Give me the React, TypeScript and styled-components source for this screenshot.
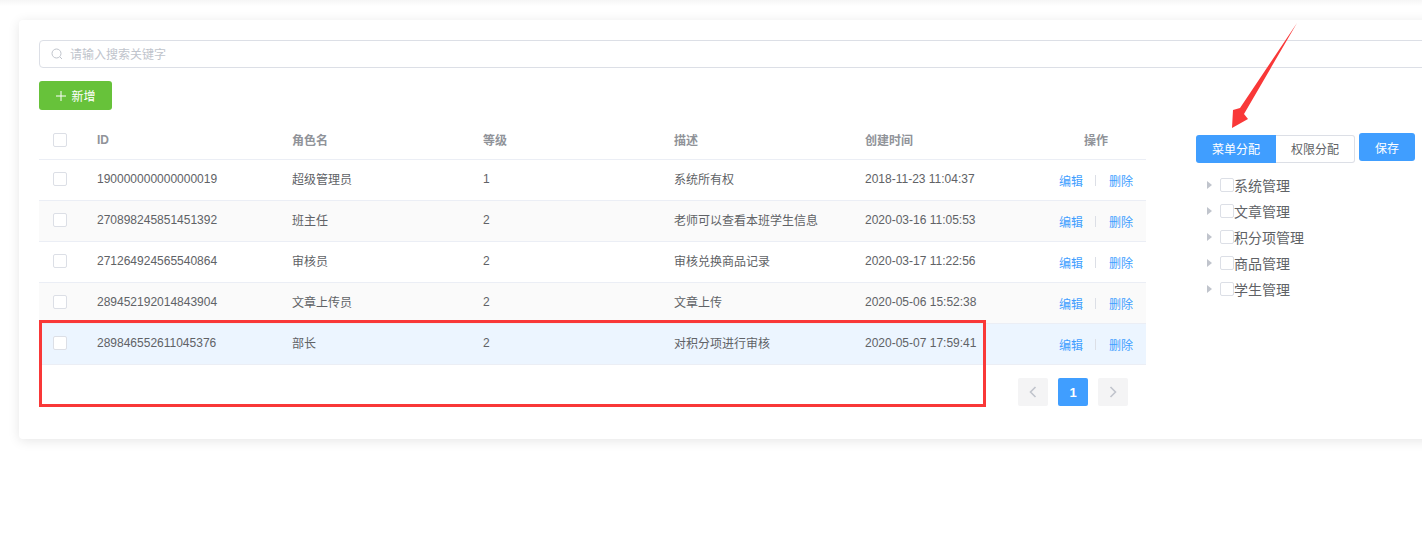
import React from "react";
import styled, { createGlobalStyle } from "styled-components";

const GlobalStyle = createGlobalStyle`
  html, body {
    margin: 0;
    padding: 0;
    background: #fff;
    font-family: "Liberation Sans", "Noto Sans CJK SC", sans-serif;
    color: #606266;
  }
`;

const Page = styled.div`
  position: relative;
  width: 1422px;
  height: 550px;
  overflow: hidden;
  padding: 20px 0 0 19px;
  box-sizing: border-box;
  background: linear-gradient(#f6f6f6 0, #fff 6px);
`;

const Card = styled.div`
  width: 1500px;
  height: 419px;
  box-sizing: border-box;
  padding: 20px;
  background: #fff;
  border-radius: 4px;
  box-shadow: 0 2px 12px 0 rgba(0, 0, 0, 0.1);
`;

const SearchBar = styled.div`
  display: flex;
  align-items: center;
  gap: 7px;
  height: 28px;
  box-sizing: border-box;
  padding: 0 0 1px 11px;
  border: 1px solid #dcdfe6;
  border-radius: 4px;
  font-size: 12px;
  color: #c0c4cc;
`;

const AddButton = styled.button`
  display: flex;
  align-items: center;
  justify-content: center;
  gap: 4px;
  width: 73px;
  height: 29px;
  margin-top: 13px;
  padding: 0;
  border: none;
  border-radius: 3px;
  background: #67c23a;
  color: #fff;
  font: inherit;
  font-size: 12px;
`;

const Main = styled.div`
  display: flex;
  gap: 50px;
  margin-top: 10px;
`;

const TableArea = styled.div`
  width: 1107px;
  flex: none;
`;

const Row = styled.div<{ $bg?: string }>`
  display: grid;
  grid-template-columns: 58px 195px 191px 191px 191px 172px 1fr;
  align-items: center;
  height: 41px;
  box-sizing: border-box;
  padding-bottom: 3px;
  border-bottom: 1px solid #ebeef5;
  background: ${({ $bg }) => $bg || "#fff"};
  font-size: 12px;
`;

const HeadRow = styled(Row)`
  height: 40px;
  padding-bottom: 0;
  color: #909399;
  font-weight: bold;
`;

const Check = styled.span`
  display: block;
  flex: none;
  width: 14px;
  height: 14px;
  box-sizing: border-box;
  border: 1px solid #dcdfe6;
  border-radius: 2px;
  background: #fff;
`;

const CheckCell = styled.div`
  padding-left: 14px;
`;

const OpsHead = styled.div`
  padding-left: 47px;
`;

const Ops = styled.div`
  display: flex;
  align-items: center;
  padding: 4px 0 0 22px;
  color: #409eff;
  white-space: nowrap;
`;

const Divider = styled.i`
  width: 1px;
  height: 11px;
  margin: 0 13px 0 12px;
  background: #dcdfe6;
`;

const Pager = styled.div`
  display: flex;
  gap: 10px;
  margin: 13px 18px 0 0;
  justify-content: flex-end;
`;

const PageButton = styled.div<{ $active?: boolean }>`
  display: flex;
  align-items: center;
  justify-content: center;
  width: 30px;
  height: 28px;
  border-radius: 2px;
  background: ${({ $active }) => ($active ? "#409eff" : "#f4f4f5")};
  color: ${({ $active }) => ($active ? "#fff" : "#c0c4cc")};
  font-size: 13px;
  font-weight: bold;
`;

const Side = styled.div`
  width: 230px;
  flex: none;
`;

const SideBar = styled.div`
  display: flex;
  align-items: flex-start;
  gap: 4px;
  margin-top: 13px;
`;

const Tabs = styled.div`
  display: flex;
  margin-top: 2px;
`;

const Tab = styled.div<{ $active?: boolean }>`
  display: flex;
  align-items: center;
  justify-content: center;
  width: ${({ $active }) => ($active ? 80 : 79)}px;
  height: 28px;
  box-sizing: border-box;
  padding-bottom: 1px;
  font-size: 12px;
  background: ${({ $active }) => ($active ? "#409eff" : "#fff")};
  color: ${({ $active }) => ($active ? "#fff" : "#606266")};
  border: ${({ $active }) => ($active ? "none" : "1px solid #dcdfe6")};
  border-left: none;
  border-radius: ${({ $active }) => ($active ? "3px 0 0 3px" : "0 3px 3px 0")};
`;

const SaveButton = styled.button`
  width: 56px;
  height: 28px;
  padding: 0;
  border: none;
  border-radius: 3px;
  background: #409eff;
  color: #fff;
  font: inherit;
  font-size: 12px;
`;

const Tree = styled.div`
  margin-top: 9px;
`;

const TreeRow = styled.div`
  display: flex;
  align-items: center;
  height: 26px;
  padding-left: 11px;
  font-size: 14px;
`;

const Caret = styled.span`
  width: 0;
  height: 0;
  margin-right: 8px;
  border-left: 5px solid #c0c4cc;
  border-top: 4px solid transparent;
  border-bottom: 4px solid transparent;
`;

const RedBox = styled.div`
  position: absolute;
  left: 39px;
  top: 320px;
  width: 947px;
  height: 87px;
  box-sizing: border-box;
  border: 3px solid #f93838;
`;

const Arrow = styled.svg`
  position: absolute;
  left: 1225px;
  top: 20px;
`;

const rows = [
  { id: "190000000000000019", name: "超级管理员", level: 1, desc: "系统所有权", time: "2018-11-23 11:04:37" },
  { id: "270898245851451392", name: "班主任", level: 2, desc: "老师可以查看本班学生信息", time: "2020-03-16 11:05:53" },
  { id: "271264924565540864", name: "审核员", level: 2, desc: "审核兑换商品记录", time: "2020-03-17 11:22:56" },
  { id: "289452192014843904", name: "文章上传员", level: 2, desc: "文章上传", time: "2020-05-06 15:52:38" },
  { id: "289846552611045376", name: "部长", level: 2, desc: "对积分项进行审核", time: "2020-05-07 17:59:41" },
];

const menus = ["系统管理", "文章管理", "积分项管理", "商品管理", "学生管理"];

const rowBg = (i: number) => {
  if (i === 4) return "#ecf5ff";
  return i % 2 === 1 ? "#fafafa" : "#fff";
};

const App: React.FC = () => (
  <Page>
    <GlobalStyle />
    <Card>
      <SearchBar>
        <svg width="12" height="12" viewBox="0 0 12 12" fill="none" stroke="#c0c4cc" strokeWidth="1">
          <circle cx="5.5" cy="5.5" r="4.5" />
          <path d="M9 9l2 2" />
        </svg>
        请输入搜索关键字
      </SearchBar>
      <AddButton>
        <svg width="12" height="12" viewBox="0 0 12 12" stroke="#fff" strokeWidth="1">
          <path d="M6 1v10M1 6h10" />
        </svg>
        新增
      </AddButton>
      <Main>
        <TableArea>
          <HeadRow>
            <CheckCell><Check /></CheckCell>
            <div>ID</div>
            <div>角色名</div>
            <div>等级</div>
            <div>描述</div>
            <div>创建时间</div>
            <OpsHead>操作</OpsHead>
          </HeadRow>
          {rows.map((r, i) => (
            <Row key={r.id} $bg={rowBg(i)}>
              <CheckCell><Check /></CheckCell>
              <div>{r.id}</div>
              <div>{r.name}</div>
              <div>{r.level}</div>
              <div>{r.desc}</div>
              <div>{r.time}</div>
              <Ops>
                编辑
                <Divider />
                删除
              </Ops>
            </Row>
          ))}
          <Pager>
            <PageButton>
              <svg width="8" height="12" viewBox="0 0 8 12" fill="none" stroke="#c0c4cc" strokeWidth="1.6">
                <path d="M6.5 1L1.5 6l5 5" />
              </svg>
            </PageButton>
            <PageButton $active>1</PageButton>
            <PageButton>
              <svg width="8" height="12" viewBox="0 0 8 12" fill="none" stroke="#c0c4cc" strokeWidth="1.6">
                <path d="M1.5 1l5 5-5 5" />
              </svg>
            </PageButton>
          </Pager>
        </TableArea>
        <Side>
          <SideBar>
            <Tabs>
              <Tab $active>菜单分配</Tab>
              <Tab>权限分配</Tab>
            </Tabs>
            <SaveButton>保存</SaveButton>
          </SideBar>
          <Tree>
            {menus.map((m) => (
              <TreeRow key={m}>
                <Caret />
                <Check />
                {m}
              </TreeRow>
            ))}
          </Tree>
        </Side>
      </Main>
    </Card>
    <RedBox />
    <Arrow width="75" height="112" viewBox="0 0 75 112">
      <path d="M72 3L19 94l4 5L7 108l1-18 7-2z" fill="#f93838" />
    </Arrow>
  </Page>
);

export default App;
